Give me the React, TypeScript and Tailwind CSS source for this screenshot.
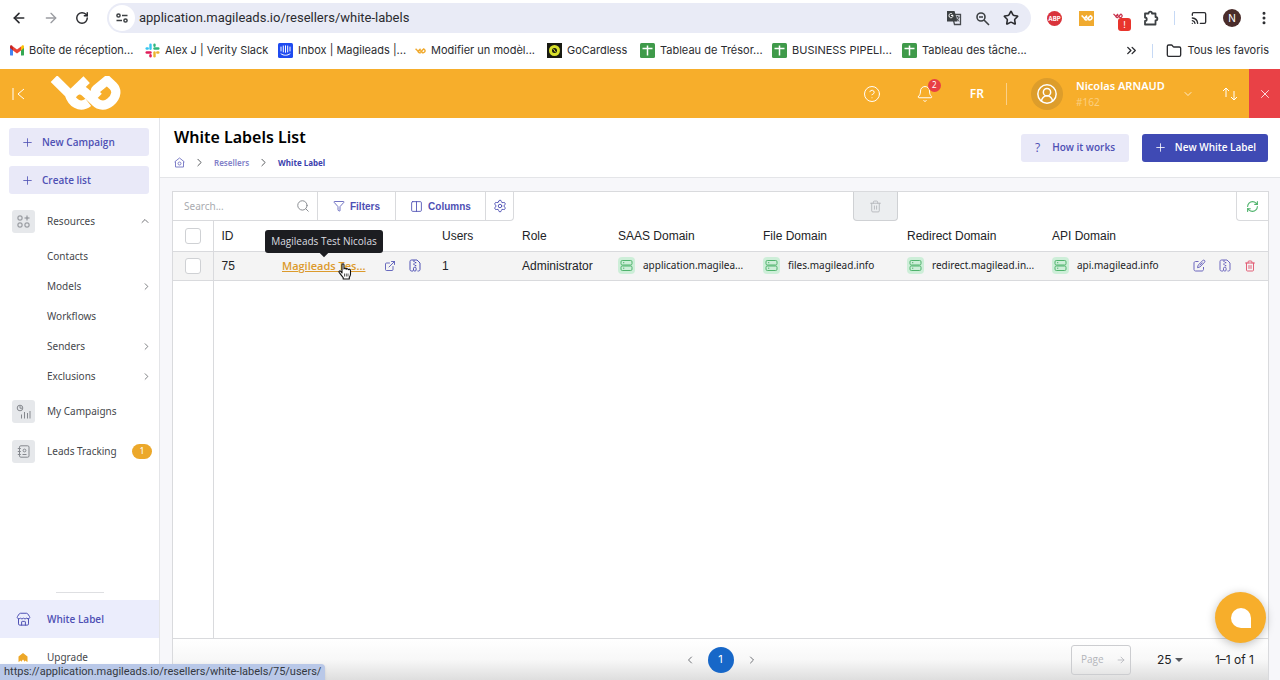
import type { ReactNode } from "react";
import {
  ArrowLeft,
  ArrowRight,
  Bell,
  Cast,
  ChevronDown,
  ChevronLeft,
  ChevronRight,
  ChevronUp,
  ChevronsRight,
  CircleHelp,
  CircleUserRound,
  Columns2,
  EllipsisVertical,
  ExternalLink,
  Folder,
  Funnel,
  Plus,
  RefreshCw,
  RotateCw,
  Search,
  Settings,
  Star,
  Store,
  Trash2,
  X,
} from "lucide-react";

/* ── Small drawings ─────────────────────────────────────────────────── */
function GmailIcon() {
  return (
    <svg width="14" height="11" viewBox="0 0 14 11" className="shrink-0">
      <path d="M0 1.5v8.2c0 .5.4.9.9.9H3V4.5z" fill="#4285f4" />
      <path d="M11 4.5v6.1h2.1c.5 0 .9-.4.9-.9V1.5z" fill="#34a853" />
      <path d="M0 1.5v1.6l3 2.3V1.4L2 .6C1.1 0 0 .5 0 1.5z" fill="#c5221f" />
      <path d="M14 1.5v1.6l-3 2.3V1.4L12 .6c.9-.6 2-.1 2 .9z" fill="#fbbc04" />
      <path d="M3 1.4l4 3 4-3v4l-4 3-4-3z" fill="#ea4335" />
    </svg>
  );
}

function SlackIcon() {
  return (
    <svg width="15" height="15" viewBox="0 0 15 15" fill="none" strokeWidth="2.4" strokeLinecap="round" className="shrink-0">
      <path d="M5.5 1.7v4" stroke="#36c5f0" />
      <path d="M1.7 5.5h1" stroke="#36c5f0" />
      <path d="M9.5 5.5h3.8" stroke="#2eb67d" />
      <path d="M9.5 1.7v1" stroke="#2eb67d" />
      <path d="M9.5 9.5v3.8" stroke="#ecb22e" />
      <path d="M12.3 9.5h1" stroke="#ecb22e" />
      <path d="M1.7 9.5h3.8" stroke="#e01e5a" />
      <path d="M5.5 12.3v1" stroke="#e01e5a" />
    </svg>
  );
}

function IntercomIcon() {
  return (
    <svg width="15" height="15" viewBox="0 0 15 15" fill="none" stroke="#fff" strokeLinecap="round" className="shrink-0">
      <rect width="15" height="15" rx="1.5" fill="#1f4bf0" stroke="none" />
      <path d="M3 4v4M5.3 3v6M7.5 2.8v6.5M9.7 3v6M12 4v4M3 10.8c2.5 2 6.5 2 9 0" />
    </svg>
  );
}

function GoCardlessIcon() {
  return (
    <svg width="15" height="15" viewBox="0 0 15 15" className="shrink-0">
      <rect width="15" height="15" fill="#191a12" />
      <circle cx="7.5" cy="7.5" r="5.5" fill="#d8e02c" />
      <circle cx="7.5" cy="7.5" r="2.5" fill="#191a12" />
      <path d="M6.5 6l2 3" stroke="#d8e02c" />
    </svg>
  );
}

function SheetIcon() {
  return (
    <svg width="15" height="15" viewBox="0 0 15 15" className="shrink-0">
      <rect width="15" height="15" rx="1.5" fill="#3f9a4a" />
      <path d="M2.5 5.5h10M7.5 2.5v10" stroke="#fff" strokeWidth="1.5" />
    </svg>
  );
}

function Logo({ className }: { className?: string }) {
  return (
    <svg viewBox="15 12 216 106" className={className} fill="none" stroke="currentColor" strokeWidth="28">
      <path d="M26 20L72 66C80 92 104 112 130 92" />
      <path d="M125 23L80 66" />
      <path d="M76 76C92 50 108 50 120 61L150 89C164 103 182 104 197 91C218 72 217 54 204 41L187 25L154 52C147 58 150 65 161 76" />
    </svg>
  );
}

function TuneIcon() {
  return (
    <svg width="12" height="10" viewBox="0 0 12 10" fill="none" stroke="#3c4043" strokeWidth="1.5">
      <circle cx="2.5" cy="2.5" r="1.6" />
      <path d="M6 2.5h5.5M.5 7.5H6" />
      <circle cx="9.5" cy="7.5" r="1.6" />
    </svg>
  );
}

function TranslateIcon() {
  return (
    <svg width="16" height="16" viewBox="0 0 16 16" fill="none">
      <path d="M6 4.5h8.5v10h-6z" stroke="#474a4f" strokeWidth="1.3" />
      <path d="M1 1h7.5l3 10.500H1z" fill="#3c4043" />
      <path d="M7 5.500H5M7 5.500c0 3-4 3-4 .2 0-2.500 2.500-2.700 3.400-1.400" stroke="#fff" />
      <path d="M9.500 7h4M11.500 6v1M13 7c-.4 2-1.500 3-2.500 4M10.500 8l2.500 3.500" stroke="#474a4f" />
    </svg>
  );
}

function ZoomOutIcon() {
  return (
    <svg width="15" height="15" viewBox="0 0 15 15" fill="none" stroke="#3c4043" strokeWidth="1.6">
      <circle cx="6" cy="6" r="4" />
      <path d="M9 9l5 5M4 6h4" />
    </svg>
  );
}

function ExtensionIcon() {
  return (
    <svg width="16" height="16" viewBox="0 0 16 16" fill="none" stroke="#3c4043" strokeWidth="1.8" strokeLinejoin="round">
      <path d="M2 3.5h3.5c0-2.500 3.500-2.500 3.500 0h3.500V7c2.500 0 2.500 3.500 0 3.500V14.500H2V11c2.300 0 2.300-3.500 0-3.500z" />
    </svg>
  );
}

function ZipFileIcon({ className }: { className?: string }) {
  return (
    <svg width="12" height="13" viewBox="0 0 12 13" fill="none" stroke="currentColor" className={className}>
      <path d="M4 12H2.500c-.8 0-1.500-.6-1.500-1.500v-8C1 1.600 1.600 1 2.500 1H8l3 3v6.500c0 .9-.7 1.500-1.500 1.500H8.500" />
      <path d="M5 1.500v1.200M6.500 3v1.200M5 4.500v1.200M6.500 6v1.200" strokeWidth="1.5" />
      <rect x="4.5" y="8.3" width="2.6" height="3.7" rx="1" />
    </svg>
  );
}

function PencilIcon() {
  return (
    <svg width="13" height="13" viewBox="0 0 13 13" fill="none" stroke="currentColor" strokeLinejoin="round">
      <path d="M5.500 2.500H2.500C1.700 2.500 1 3.200 1 4v6.500c0 .8.700 1.500 1.500 1.500H9c.8 0 1.500-.7 1.500-1.500V8" />
      <path d="M4.500 8.700l.6-2.500 4.700-4.700c1.200-1.200 2.900.5 1.800 1.700L6.900 8z" />
      <path d="M6.800 6.300l2.700-2.700" />
    </svg>
  );
}

function ServerIcon() {
  return (
    <span className="flex size-[17px] shrink-0 items-center justify-center rounded-sm bg-[#cdeed8]">
      <svg width="13" height="13" viewBox="0 0 13 13" fill="none" stroke="#4fb36c">
        <rect x="1" y="1.5" width="11" height="4.5" rx="1.3" />
        <rect x="1" y="7" width="11" height="4.5" rx="1.3" />
        <path d="M3 3.7h1.3M3 9.2h1.3" />
      </svg>
    </span>
  );
}

function AppsIcon() {
  return (
    <svg width="13" height="13" viewBox="0 0 13 13" fill="none" stroke="#85888e">
      <rect x="1" y="1" width="4" height="4" rx="1" />
      <rect x="1" y="8" width="4" height="4" rx="1" />
      <rect x="8" y="8" width="4" height="4" rx="1" />
      <path d="M10 .5v5M7.500 3h5" />
    </svg>
  );
}

function StatsIcon() {
  return (
    <svg width="15" height="15" viewBox="0 0 15 15" fill="none" stroke="#85888e">
      <circle cx="4" cy="4" r="2.8" />
      <path d="M4 2v2.200h2M5.500 10.500v4M8.500 8v6.500M11.500 9v5.500M14 7v7.500" />
    </svg>
  );
}

function AddressBookIcon() {
  return (
    <svg width="13" height="13" viewBox="0 0 13 13" fill="none" stroke="#85888e">
      <rect x="2.5" y=".8" width="9.5" height="11.4" rx="1.3" />
      <path d="M.8 3.500h3M.8 6.500h3M.8 9.500h3M5.500 9.500h4" />
      <circle cx="7.5" cy="5.5" r="1.4" />
    </svg>
  );
}

function HandCursor() {
  return (
    <svg width="14" height="17" viewBox="0 0 14 17" fill="#fff" stroke="#111" strokeWidth="1.1" strokeLinejoin="round">
      <path d="M4 10V2c0-1.600 2-1.600 2 0v4c.2-1 1.900-1 2.200.3.400-1 1.900-.8 2.200.4.600-.8 2.100-.4 2.100 1v3.500c0 1.300-.6 2.300-1.200 3.300V16H5.200v-1.300C4 13.300 2.500 11 1.300 9.600c-.9-1.200.5-2.400 1.500-1.200z" />
      <path d="M6.500 10.500v3M8.300 10.500v3M10 10.500v3" strokeWidth=".7" />
    </svg>
  );
}

/* ── Browser chrome ─────────────────────────────────────────────────── */
const BOOKMARKS: { label: string; icon: ReactNode; width: string }[] = [
  { label: "Boîte de réception...", icon: <GmailIcon />, width: "w-[135px]" },
  { label: "Alex J | Verity Slack", icon: <SlackIcon />, width: "w-[133px]" },
  { label: "Inbox | Magileads |...", icon: <IntercomIcon />, width: "w-[137px]" },
  { label: "Modifier un modèl...", icon: <Logo className="h-[6px] w-[11px] shrink-0 text-[#f0aa2f]" />, width: "w-[132px]" },
  { label: "GoCardless", icon: <GoCardlessIcon />, width: "w-[93px]" },
  { label: "Tableau de Trésor...", icon: <SheetIcon />, width: "w-[132px]" },
  { label: "BUSINESS PIPELI...", icon: <SheetIcon />, width: "w-[130px]" },
  { label: "Tableau des tâche...", icon: <SheetIcon />, width: "w-[135px]" },
];

function BrowserBar() {
  return (
    <div className="shrink-0 bg-white font-[Inter,sans-serif] text-[#2b2c30]">
      <div className="flex h-9 items-center">
        <div className="flex w-[107px] items-center gap-4 pl-[11px]">
          <button aria-label="Back"><ArrowLeft size={16} strokeWidth={2.5} /></button>
          <button aria-label="Forward" className="text-[#9a9ca1]"><ArrowRight size={16} /></button>
          <button aria-label="Reload"><RotateCw size={14} strokeWidth={2.5} /></button>
        </div>
        <div className="flex h-[30px] flex-1 items-center rounded-full bg-[#e9ebf6] pl-[2px] pr-3">
          <button aria-label="Site settings" className="flex size-[26px] items-center justify-center rounded-full bg-white">
            <TuneIcon />
          </button>
          <input
            aria-label="Address"
            defaultValue="application.magileads.io/resellers/white-labels"
            className="ml-1 min-w-0 flex-1 bg-transparent font-[Roboto,sans-serif] text-[13px] outline-none"
          />
          <div className="flex items-center gap-[13px]">
            <TranslateIcon />
            <ZoomOutIcon />
            <Star size={16} strokeWidth={2.4} />
          </div>
        </div>
        <div className="flex w-[249px] items-center pl-4 pr-2">
          <span className="flex size-[15px] items-center justify-center rounded-full bg-[#d9333b] text-[6px] font-bold text-white">ABP</span>
          <span className="ml-[17px] flex size-[15px] items-center justify-center bg-[#f0aa2f] text-white">
            <Logo className="h-[6px] w-3" />
          </span>
          <span className="relative ml-[19px] size-4 text-[#c8354f]">
            <Logo className="mt-[3px] h-[6px] w-[10px]" />
            <span className="absolute left-[5px] top-2 flex size-[13px] items-center justify-center rounded-[3px] bg-[#e8352c] text-[9px] text-white">!</span>
          </span>
          <span className="ml-[14px]"><ExtensionIcon /></span>
          <span className="ml-[15px] h-[14px] w-px bg-[#c6d9f5]" />
          <Cast size={16} className="ml-4" />
          <span className="ml-4 flex size-[18px] items-center justify-center rounded-full bg-[#4a2c2a] text-[10px] text-white">N</span>
          <EllipsisVertical size={16} strokeWidth={2.5} className="ml-auto" />
        </div>
      </div>
      <div className="flex h-[33px] items-center pb-1 pl-[10px] pr-[11px] text-[11px]">
        {BOOKMARKS.map((b) => (
          <a key={b.label} href="#" className={`flex items-center gap-[5px] whitespace-nowrap ${b.width}`}>
            {b.icon}
            {b.label}
          </a>
        ))}
        <ChevronsRight size={15} strokeWidth={2.2} className="ml-auto" />
        <span className="mx-[13px] h-[14px] w-px bg-[#c6d9f5]" />
        <a href="#" className="flex items-center gap-[6px] whitespace-nowrap">
          <Folder size={16} />
          Tous les favoris
        </a>
      </div>
    </div>
  );
}

/* ── App header ─────────────────────────────────────────────────────── */
function TopBar() {
  return (
    <header className="flex h-[49px] shrink-0 items-center bg-[#f7ae2b] text-white">
      <button aria-label="Collapse menu" className="ml-3">
        <svg width="14" height="14" viewBox="0 0 14 14" fill="none" stroke="currentColor">
          <path d="M1 1v12M12 2L6 7l6 5" />
        </svg>
      </button>
      <Logo className="ml-6 h-[35px] w-[72px]" />
      <div className="ml-auto flex h-full items-center">
        <button aria-label="Help"><CircleHelp size={18} strokeWidth={1.3} /></button>
        <button aria-label="Notifications" className="relative ml-[35px]">
          <Bell size={18} strokeWidth={1.3} />
          <span className="absolute -top-[6px] left-3 flex size-[13px] items-center justify-center rounded-full bg-[#e83f44] text-[8px]">2</span>
        </button>
        <button className="ml-9 text-[12px] font-semibold">FR</button>
        <span className="ml-[22px] h-[22px] w-px bg-[#fbd089]" />
        <span className="ml-6 flex size-8 items-center justify-center rounded-full bg-[#dd9d2b]">
          <CircleUserRound size={22} strokeWidth={1.6} />
        </span>
        <div className="ml-[13px] w-[106px]">
          <div className="text-[11px] font-semibold leading-4">Nicolas ARNAUD</div>
          <div className="text-[10px] leading-4 text-[#fbcf80]">#162</div>
        </div>
        <button aria-label="Account menu"><ChevronDown size={12} strokeWidth={1.5} /></button>
        <button aria-label="Switch account" className="ml-[27px]">
          <svg width="18" height="16" viewBox="0 0 18 16" fill="none" stroke="currentColor">
            <path d="M5 11V2M2 5l3-3 3 3M13 5v9M10 11l3 3 3-3" />
          </svg>
        </button>
        <button aria-label="Close" className="ml-[10px] flex h-full w-[31px] items-center justify-center bg-[#e94146]">
          <X size={14} strokeWidth={1.4} />
        </button>
      </div>
    </header>
  );
}

/* ── Sidebar ────────────────────────────────────────────────────────── */
const RESOURCES = [
  { label: "Contacts", expandable: false },
  { label: "Models", expandable: true },
  { label: "Workflows", expandable: false },
  { label: "Senders", expandable: true },
  { label: "Exclusions", expandable: true },
];

function IconBox({ children }: { children: ReactNode }) {
  return <span className="flex size-[23px] shrink-0 items-center justify-center rounded-[3px] bg-[#e6e8eb]">{children}</span>;
}

function Sidebar() {
  return (
    <nav className="flex w-[160px] shrink-0 flex-col border-r border-[#e4e5e8] bg-white text-[10px] text-[#45474c]">
      <div className="flex flex-col gap-[10px] pl-[9px] pr-[10px] pt-[10px]">
        {["New Campaign", "Create list"].map((label) => (
          <button key={label} className="flex h-7 items-center gap-2 rounded-[3px] bg-[#e9e9f8] pl-3 font-['Open_Sans',sans-serif] font-semibold text-[#4e50b4]">
            <Plus size={13} strokeWidth={1.5} />
            {label}
          </button>
        ))}
      </div>
      <a href="#" className="mt-[7px] flex h-10 items-center gap-3 pl-3 pr-2">
        <IconBox><AppsIcon /></IconBox>
        <span className="flex-1">Resources</span>
        <ChevronUp size={12} strokeWidth={1.5} />
      </a>
      {RESOURCES.map((item) => (
        <a key={item.label} href="#" className="flex h-[30px] items-center pl-[47px] pr-[7px]">
          <span className="flex-1">{item.label}</span>
          {item.expandable && <ChevronRight size={11} strokeWidth={1.5} />}
        </a>
      ))}
      <a href="#" className="flex h-10 items-center gap-3 pl-3">
        <IconBox><StatsIcon /></IconBox>
        My Campaigns
      </a>
      <a href="#" className="flex h-10 items-center gap-3 pl-3 pr-[7px]">
        <IconBox><AddressBookIcon /></IconBox>
        <span className="flex-1 whitespace-nowrap">Leads Tracking</span>
        <span className="flex h-[15px] w-5 items-center justify-center rounded-full bg-[#eca82a] text-[9px] text-white">1</span>
      </a>

      <div className="mt-auto pb-1">
        <div className="mx-auto mb-[7px] h-px w-12 bg-[#dedfe2]" />
        <a href="#" className="flex h-[38px] items-center bg-[#ebedfc] pl-4 font-['Open_Sans',sans-serif] font-semibold text-[#4e50b4]">
          <Store size={15} strokeWidth={1.6} />
          <span className="ml-4">White Label</span>
        </a>
        <a href="#" className="flex h-[38px] items-center pl-[18px]">
          <svg width="10" height="9" viewBox="0 0 10 9" fill="#eda728">
            <path d="M5 0l4.500 3.500V9L7 7.500V9L5 6.500 3 9V7.500L.5 9V3.500z" />
          </svg>
          <span className="ml-[19px]">Upgrade</span>
        </a>
      </div>
    </nav>
  );
}

/* ── Page heading ───────────────────────────────────────────────────── */
function PageHeading() {
  return (
    <div className="flex h-[60px] shrink-0 items-center justify-between border-b border-[#e4e5e8] bg-white pl-[14px] pr-3">
      <div>
        <h1 className="text-[16px] font-semibold leading-6 text-black">White Labels List</h1>
        <div className="mt-[6px] flex h-4 items-center text-[8px] font-semibold text-[#7f80c8]">
          <svg width="11" height="11" viewBox="0 0 11 11" fill="none" stroke="currentColor">
            <path d="M.5 5L5.500 1l5 4M1.500 4.500V10h8V4.500" />
            <circle cx="5.5" cy="6.5" r="1.5" />
          </svg>
          <ChevronRight size={13} strokeWidth={1.8} className="mx-2 text-[#55575c]" />
          <a href="#">Resellers</a>
          <ChevronRight size={13} strokeWidth={1.8} className="mx-2 text-[#55575c]" />
          <a href="#" className="font-bold text-[#3c3fae]">White Label</a>
        </div>
      </div>
      <div className="flex gap-[13px] font-['Open_Sans',sans-serif] text-[10px] font-semibold">
        <button className="flex h-7 w-[108px] items-center justify-center gap-3 rounded-[3px] bg-[#e9e9f8] text-[#4e50b4]">
          <span className="text-[12px] font-normal">?</span>
          How it works
        </button>
        <button className="flex h-7 w-[126px] items-center justify-center gap-2 rounded-[3px] bg-[#3f4ab4] text-white">
          <Plus size={13} strokeWidth={1.5} />
          New White Label
        </button>
      </div>
    </div>
  );
}

/* ── Table ──────────────────────────────────────────────────────────── */
function Toolbar() {
  return (
    <div className="flex h-[29px] shrink-0 justify-between font-['Liberation_Sans',sans-serif] text-[10px] font-bold text-[#4e50b4]">
      <div className="flex">
        <label className="flex w-[145px] items-center border-b border-r border-[#d9dadd] pl-[11px] pr-[7px] text-[#8a8d92]">
          <input
            aria-label="Search"
            placeholder="Search..."
            className="min-w-0 flex-1 font-['Noto_Sans',sans-serif] text-[10px] font-normal outline-none placeholder:text-[#a9abb0]"
          />
          <Search size={14} strokeWidth={1.7} />
        </label>
        <button className="flex w-[78px] items-center justify-center gap-[5px] border-b border-r border-[#d9dadd]">
          <Funnel size={12} strokeWidth={1.6} />
          Filters
        </button>
        <button className="flex w-[90px] items-center justify-center gap-[5px] border-b border-r border-[#d9dadd]">
          <Columns2 size={13} strokeWidth={1.6} />
          Columns
        </button>
        <button aria-label="Table settings" className="flex w-7 items-center justify-center rounded-br border-b border-r border-[#d9dadd]">
          <Settings size={14} strokeWidth={1.6} />
        </button>
      </div>
      <button aria-label="Delete selected" className="flex w-[45px] items-center justify-center rounded-b border border-t-0 border-[#cfd1d4] bg-[#eceef0] text-[#b3b5ba]">
        <Trash2 size={13} strokeWidth={1.6} />
      </button>
      <button aria-label="Refresh" className="flex w-8 items-center justify-center rounded-bl border-b border-l border-[#d9dadd] text-[#4fb36c]">
        <RefreshCw size={13} strokeWidth={2} />
      </button>
    </div>
  );
}

const DOMAIN_COLUMNS = ["SAAS Domain", "File Domain", "Redirect Domain", "API Domain"];
const DOMAINS = ["application.magilea...", "files.magilead.info", "redirect.magilead.in...", "api.magilead.info"];

function Checkbox({ label }: { label: string }) {
  return (
    <input
      type="checkbox"
      aria-label={label}
      className="mx-auto block size-4 appearance-none rounded-[3px] border border-[#cfd1d4] bg-white"
    />
  );
}

function LabelsTable() {
  return (
    <table className="w-full table-fixed text-left font-['Liberation_Sans',sans-serif] text-[12px] text-[#222326]">
      <colgroup>
        <col className="w-[40px]" />
        <col className="w-[61px]" />
        <col className="w-[160px]" />
        <col className="w-[80px]" />
        <col className="w-[96px]" />
        <col className="w-[145px]" />
        <col className="w-[144px]" />
        <col className="w-[145px]" />
        <col className="w-[144px]" />
        <col className="w-[80px]" />
      </colgroup>
      <thead>
        <tr className="h-[30px] border-b border-[#d9dadd] whitespace-nowrap [&>th]:font-normal">
          <th className="border-r border-[#d9dadd]"><Checkbox label="Select all" /></th>
          <th className="px-2">ID</th>
          <th aria-label="Name" />
          <th className="px-2">Users</th>
          <th className="px-2">Role</th>
          {DOMAIN_COLUMNS.map((c) => (
            <th key={c} className="px-2">{c}</th>
          ))}
          <th />
        </tr>
      </thead>
      <tbody>
        <tr className="h-[29px] border-b border-[#d9dadd] bg-[#f4f4f4] whitespace-nowrap">
          <td className="border-r border-[#d9dadd]"><Checkbox label="Select row 75" /></td>
          <td className="px-2">75</td>
          <td className="px-2">
            <div className="flex items-center text-[#4e50b4]">
              <span className="relative w-[102px] font-['Open_Sans',sans-serif]">
                <a href="#" className="text-[11px] font-semibold text-[#dc9a2c] underline">
                  Magileads Tes...
                </a>
                <span
                  role="tooltip"
                  className="absolute bottom-[22px] left-[42px] flex h-[23px] w-[118px] -translate-x-1/2 items-center justify-center rounded-[3px] bg-[#1c1d21] text-[10px] text-[#dcdde0]"
                >
                  Magileads Test Nicolas
                  <span className="absolute -bottom-[3px] size-[6px] rotate-45 bg-[#1c1d21]" />
                </span>
                <span className="absolute left-[56px] top-[6px]"><HandCursor /></span>
              </span>
              <ExternalLink size={12} strokeWidth={1.7} />
              <ZipFileIcon className="ml-[13px]" />
            </div>
          </td>
          <td className="px-2">1</td>
          <td className="px-2">Administrator</td>
          {DOMAINS.map((d) => (
            <td key={d} className="px-2">
              <div className="flex items-center gap-2 font-['Noto_Sans',sans-serif] text-[10px]">
                <ServerIcon />
                {d}
              </div>
            </td>
          ))}
          <td>
            <div className="flex items-center justify-end gap-[13px] pr-3 text-[#6c66be]">
              <button aria-label="Edit"><PencilIcon /></button>
              <button aria-label="Archive"><ZipFileIcon /></button>
              <button aria-label="Delete" className="text-[#e25a72]"><Trash2 size={12} strokeWidth={1.9} /></button>
            </div>
          </td>
        </tr>
      </tbody>
    </table>
  );
}

function Pagination() {
  return (
    <div className="relative flex h-[41px] shrink-0 items-center bg-linear-to-b from-white via-[#f8f8f8] to-[#dedede] text-[12px] text-[#222326]">
      <div className="flex flex-1 items-center justify-center gap-3 text-[#6f7176]">
        <button aria-label="Previous page"><ChevronLeft size={12} /></button>
        <button className="flex size-[26px] items-center justify-center rounded-full bg-[#1767c8] font-[Inter,sans-serif] text-[11px] text-white">1</button>
        <button aria-label="Next page"><ChevronRight size={12} /></button>
      </div>
      <div className="absolute right-[14px] flex items-center font-[Inter,sans-serif]">
        <label className="flex h-[30px] w-[60px] items-center rounded-[3px] border border-[#cccdd0] pl-[9px] pr-1 text-[#b3b5ba]">
          <input
            aria-label="Page"
            placeholder="Page"
            className="w-full min-w-0 font-['Open_Sans',sans-serif] text-[10px] outline-none placeholder:text-[#b3b5ba]"
          />
          <ArrowRight size={10} className="shrink-0" />
        </label>
        <label className="relative ml-[26px] flex items-center">
          <select aria-label="Rows per page" className="w-8 appearance-none bg-transparent outline-none" defaultValue="25">
            <option>25</option>
            <option>50</option>
            <option>100</option>
          </select>
          <span className="absolute left-[18px] border-x-4 border-t-4 border-x-transparent border-t-[#55575c]" />
        </label>
        <span className="ml-[26px]">1–1 of 1</span>
      </div>
    </div>
  );
}

/* ── Page ───────────────────────────────────────────────────────────── */
export default function App() {
  return (
    <div className="relative flex h-screen flex-col overflow-hidden bg-[#f7f7fa] font-['Noto_Sans',sans-serif]">
      <BrowserBar />
      <TopBar />
      <div className="flex min-h-0 flex-1">
        <Sidebar />
        <main className="flex min-w-0 flex-1 flex-col">
          <PageHeading />
          <section className="ml-3 mr-[11px] mt-[13px] flex min-h-0 flex-1 flex-col border-x border-t border-[#d9dadd] bg-white">
            <Toolbar />
            <LabelsTable />
            <div className="flex flex-1 border-b border-[#d9dadd]">
              <div className="w-[41px] border-r border-[#d9dadd]" />
            </div>
            <Pagination />
          </section>
        </main>
      </div>

      {/* Chat launcher */}
      <button
        aria-label="Open chat"
        className="absolute bottom-[37px] right-[14px] flex size-[51px] items-center justify-center rounded-full bg-[#f7ae2b] shadow-[0_2px_10px_rgba(0,0,0,0.25)]"
      >
        <span className="size-5 rounded-full rounded-br-[2px] bg-white" />
      </button>

      {/* Link status */}
      <div className="absolute bottom-0 left-0 flex h-4 items-center rounded-tr-[4px] bg-[#b9c8e8] px-1 font-[Roboto,sans-serif] text-[11px] text-[#34383f] shadow">
        https://application.magileads.io/resellers/white-labels/75/users/
      </div>
    </div>
  );
}
